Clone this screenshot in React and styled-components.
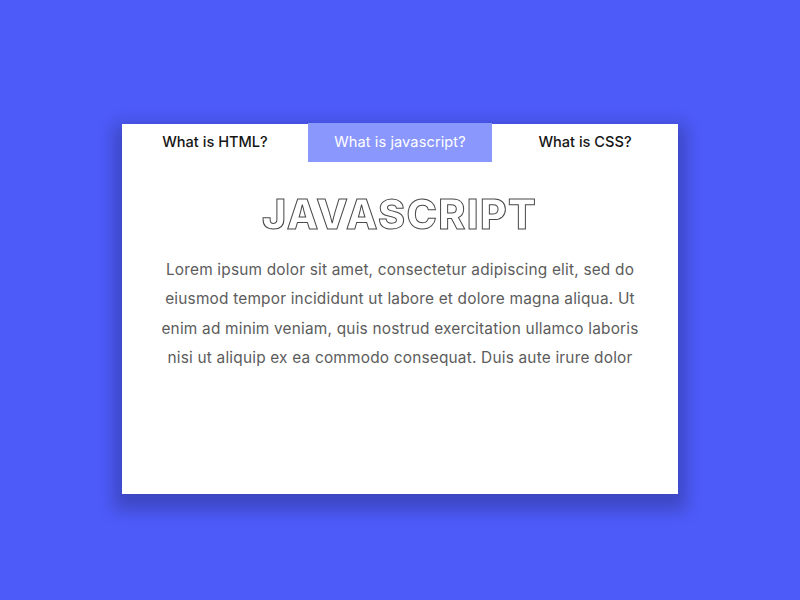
import React from "react";
import styled, { createGlobalStyle } from "styled-components";

const Global = createGlobalStyle`
  html, body { margin: 0; padding: 0; }
  body { background: #4d5bf9; font-family: "Inter", "Open Sans", sans-serif; }
`;

const Page = styled.main`
  width: 800px;
  height: 600px;
  display: flex;
  align-items: flex-start;
  justify-content: center;
  padding-top: 124px;
  box-sizing: border-box;
  background: #4d5bf9;
  overflow: hidden;
`;

const Card = styled.section`
  width: 556px;
  height: 370px;
  background: #fff;
  box-shadow: 0 8px 16px 8px rgba(0, 0, 0, 0.22);
`;

const Tabs = styled.nav`
  display: flex;
  margin-top: -1.5px;
  height: 39px;
`;

const Tab = styled.button`
  flex: 0 0 ${(p) => p.$width}px;
  border: 0;
  padding: 0;
  font-family: inherit;
  font-size: 14.6px;
  font-weight: ${(p) => (p.$active ? 400 : 500)};
  letter-spacing: ${(p) => (p.$active ? "0.1px" : "0")};
  background: ${(p) => (p.$active ? "#8a97fd" : "transparent")};
  color: ${(p) => (p.$active ? "#fff" : "#151515")};
`;

const Content = styled.article`
  display: flex;
  flex-direction: column;
  align-items: center;
  padding-top: 29px;
`;

const Title = styled.h1`
  margin: 0;
  font-size: 41px;
  line-height: 46px;
  font-weight: 800;
  letter-spacing: 1.4px;
  color: #fff;
  -webkit-text-stroke: 1px #4a4a4a;
  will-change: transform;
`;

const Body = styled.p`
  margin: 18px 0 0;
  width: 490px;
  text-align: center;
  font-size: 15.4px;
  letter-spacing: 0.2px;
  line-height: 29.5px;
  color: #5c5c5c;
`;

export default function App() {
  return (
    <Page>
      <Global />
      <Card>
        <Tabs>
          <Tab $width={186}>What is HTML?</Tab>
          <Tab $width={184} $active>What is javascript?</Tab>
          <Tab $width={186}>What is CSS?</Tab>
        </Tabs>
        <Content>
          <Title>JAVASCRIPT</Title>
          <Body>
            Lorem ipsum dolor sit amet, consectetur adipiscing elit, sed do eiusmod tempor incididunt ut labore et dolore magna aliqua. Ut enim ad minim veniam, quis nostrud exercitation ullamco laboris nisi ut aliquip ex ea commodo consequat. Duis aute irure dolor
          </Body>
        </Content>
      </Card>
    </Page>
  );
}
